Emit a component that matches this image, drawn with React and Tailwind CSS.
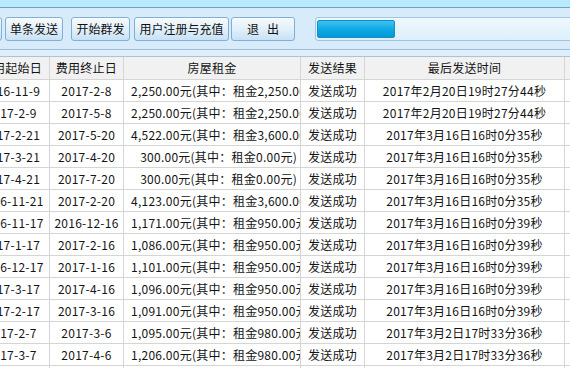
const rows = [
  ['2016-11-9', '2017-2-8', '2,250.00元(其中：租金2,250.00元)', '2017年2月20日19时27分44秒'],
  ['2017-2-9', '2017-5-8', '2,250.00元(其中：租金2,250.00元)', '2017年2月20日19时27分44秒'],
  ['2017-2-21', '2017-5-20', '4,522.00元(其中：租金3,600.00元)', '2017年3月16日16时0分35秒'],
  ['2017-3-21', '2017-4-20', '300.00元(其中：租金0.00元)', '2017年3月16日16时0分35秒'],
  ['2017-4-21', '2017-7-20', '300.00元(其中：租金0.00元)', '2017年3月16日16时0分35秒'],
  ['2016-11-21', '2017-2-20', '4,123.00元(其中：租金3,600.00元)', '2017年3月16日16时0分35秒'],
  ['2016-11-17', '2016-12-16', '1,171.00元(其中：租金950.00元)', '2017年3月16日16时0分39秒'],
  ['2017-1-17', '2017-2-16', '1,086.00元(其中：租金950.00元)', '2017年3月16日16时0分39秒'],
  ['2016-12-17', '2017-1-16', '1,101.00元(其中：租金950.00元)', '2017年3月16日16时0分39秒'],
  ['2017-3-17', '2017-4-16', '1,096.00元(其中：租金950.00元)', '2017年3月16日16时0分39秒'],
  ['2017-2-17', '2017-3-16', '1,091.00元(其中：租金950.00元)', '2017年3月16日16时0分39秒'],
  ['2017-2-7', '2017-3-6', '1,095.00元(其中：租金980.00元)', '2017年3月2日17时33分36秒'],
  ['2017-3-7', '2017-4-6', '1,206.00元(其中：租金980.00元)', '2017年3月2日17时33分36秒'],
  ['2017-4-7', '2017-7-6', '3,100.00元(其中：租金2,940.00元)', '2017年3月2日17时33分36秒'],
];

function ToolButton({ children, className = '' }) {
  return (
    <button
      className={`h-[24px] shrink-0 rounded-[3px] border border-[#7fb0d3] bg-gradient-to-b from-[#f5fafe] via-[#e2f0fb] to-[#c9e1f4] text-[12px] leading-none text-[#111] whitespace-pre shadow-[inset_0_1px_0_#ffffff] ${className}`}
    >
      {children}
    </button>
  );
}

const cell = 'shrink-0 border-r border-b border-[#d5d5d5] overflow-hidden whitespace-nowrap';

export default function App() {
  return (
    <div
      className="w-[570px] h-[368px] overflow-hidden bg-white text-[12px] text-[#141414]"
      style={{ fontFamily: '"Noto Sans CJK SC", "Microsoft YaHei", sans-serif' }}
    >
      {/* top strip */}
      <div className="h-[8px] bg-[#b7eafb] border-b border-[#6ea4c4]" />

      {/* toolbar */}
      <div className="h-[42px] bg-[#d7ebfa] border-b border-[#9cc2dc] flex items-start pt-[9px]">
        <ToolButton className="w-[30px] ml-[-28px]" />
        <ToolButton className="w-[58px] ml-[3px]">单条发送</ToolButton>
        <ToolButton className="w-[59px] ml-[8px]">开始群发</ToolButton>
        <ToolButton className="w-[95px] ml-[4px]">用户注册与充值</ToolButton>
        <ToolButton className="w-[64px] ml-[2px]">退   出</ToolButton>
        <div className="ml-[20px] h-[24px] w-[300px] shrink-0 rounded-[3px] border border-[#9fc6de] bg-gradient-to-b from-[#eef8fe] to-[#dcf0fb] pl-[1px] pt-[2px]">
          <div className="h-[18px] w-[78px] rounded-[2px] border border-[#1a8cc4] bg-gradient-to-b from-[#38c2f0] via-[#0eaae6] to-[#009ad8]" />
        </div>
      </div>

      <div className="h-[7px] bg-[#dfeefa] border-b border-[#a9c3d4]" />

      {/* grid */}
      <div className="ml-[-26px] tracking-[0.25px]">
        <div className="flex bg-[#f1f1f1] text-center">
          <div className={`${cell} h-[23px] leading-[22px] w-[76px] border-[#cfcfcf]`}>费用起始日</div>
          <div className={`${cell} h-[23px] leading-[22px] w-[74px] border-[#cfcfcf]`}>费用终止日</div>
          <div className={`${cell} h-[23px] leading-[22px] w-[177px] border-[#cfcfcf]`}>房屋租金</div>
          <div className={`${cell} h-[23px] leading-[22px] w-[64px] border-[#cfcfcf]`}>发送结果</div>
          <div className={`${cell} h-[23px] leading-[22px] w-[200px] border-[#cfcfcf]`}>最后发送时间</div>
          <div className={`${cell} h-[23px] leading-[22px] w-[60px] border-[#cfcfcf]`}>备注</div>
        </div>
        {rows.map((r, i) => (
          <div key={i} className="flex">
            <div className={`${cell} h-[22px] leading-[21px] w-[76px] text-center`}>{r[0]}</div>
            <div className={`${cell} h-[22px] leading-[21px] w-[74px] text-center`}>{r[1]}</div>
            <div className={`${cell} h-[22px] leading-[21px] w-[177px] text-right pl-[7px] pr-[3px]`}>{r[2]}</div>
            <div className={`${cell} h-[22px] leading-[21px] w-[64px] text-center`}>发送成功</div>
            <div className={`${cell} h-[22px] leading-[21px] w-[200px] text-center`}>{r[3]}</div>
            <div className={`${cell} h-[22px] leading-[21px] w-[60px]`} />
          </div>
        ))}
      </div>
    </div>
  );
}
